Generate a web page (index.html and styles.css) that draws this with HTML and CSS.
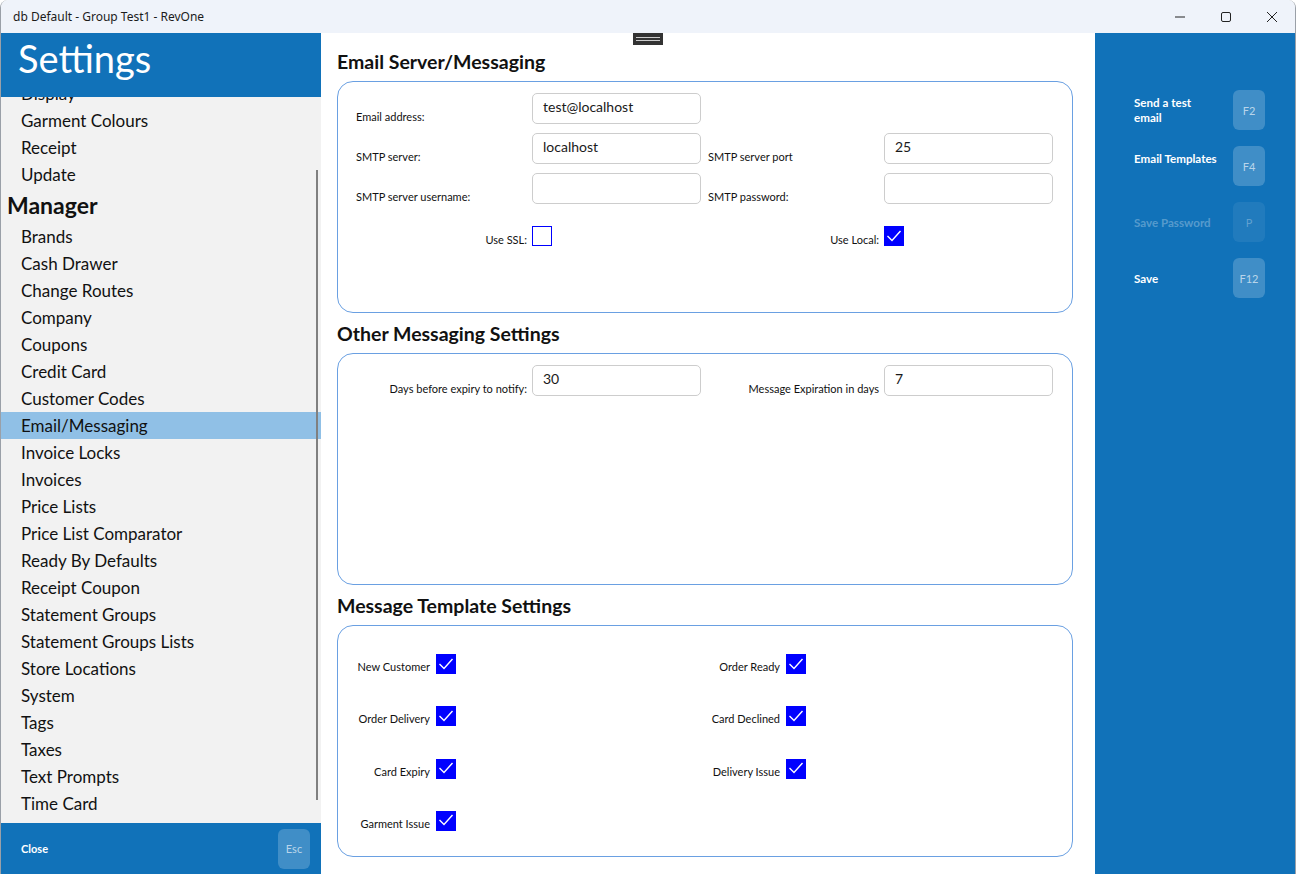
FILE: index.html
```html
<!DOCTYPE html>
<html>
<head>
<meta charset="utf-8">
<link rel="stylesheet" href="styles.css">
</head>
<body>
<div class="window">
  <div class="titlebar">
    <span class="title">db Default - Group Test1 - RevOne</span>
    <div class="controls">
      <svg class="ctl" width="46" height="33" viewBox="0 0 46 33"><line x1="18" y1="17" x2="28" y2="17" stroke="#222" stroke-width="1"/></svg>
      <svg class="ctl" width="46" height="33" viewBox="0 0 46 33"><rect x="18.5" y="12.5" width="9" height="9" rx="1.5" fill="none" stroke="#222" stroke-width="1"/></svg>
      <svg class="ctl" width="46" height="33" viewBox="0 0 46 33"><path d="M18 12 L28 22 M28 12 L18 22" stroke="#222" stroke-width="1"/></svg>
    </div>
  </div>
  <div class="content">
    <aside class="sidebar">
      <div class="side-head">Settings</div>
      <div class="list">
        <div class="items">
          <div class="item">Display</div>
          <div class="item">Garment Colours</div>
          <div class="item">Receipt</div>
          <div class="item">Update</div>
          <div class="group">Manager</div>
          <div class="item">Brands</div>
          <div class="item">Cash Drawer</div>
          <div class="item">Change Routes</div>
          <div class="item">Company</div>
          <div class="item">Coupons</div>
          <div class="item">Credit Card</div>
          <div class="item">Customer Codes</div>
          <div class="item selected">Email/Messaging</div>
          <div class="item">Invoice Locks</div>
          <div class="item">Invoices</div>
          <div class="item">Price Lists</div>
          <div class="item">Price List Comparator</div>
          <div class="item">Ready By Defaults</div>
          <div class="item">Receipt Coupon</div>
          <div class="item">Statement Groups</div>
          <div class="item">Statement Groups Lists</div>
          <div class="item">Store Locations</div>
          <div class="item">System</div>
          <div class="item">Tags</div>
          <div class="item">Taxes</div>
          <div class="item">Text Prompts</div>
          <div class="item">Time Card</div>
        </div>
        <div class="scrollbar"></div>
      </div>
      <div class="side-foot">
        <span class="foot-label">Close</span>
        <span class="key">Esc</span>
      </div>
    </aside>

    <main class="main">
      <div class="handle"><span></span><span></span></div>

      <h2 class="sec-title first">Email Server/Messaging</h2>
      <section class="box box-server">
        <div class="row">
          <div class="field"><label class="lbl">Email address:</label><div class="input">test@localhost</div></div>
        </div>
        <div class="row">
          <div class="field"><label class="lbl">SMTP server:</label><div class="input">localhost</div></div>
          <div class="field"><label class="lbl">SMTP server port</label><div class="input">25</div></div>
        </div>
        <div class="row">
          <div class="field"><label class="lbl">SMTP server username:</label><div class="input"></div></div>
          <div class="field"><label class="lbl">SMTP password:</label><div class="input"></div></div>
        </div>
        <div class="row row-check">
          <div class="field"><label class="lbl right">Use SSL:</label><div class="inputcol"><span class="cb"></span></div></div>
          <div class="field"><label class="lbl right">Use Local:</label><div class="inputcol"><span class="cb checked"><svg viewBox="0 0 20 20"><path d="M3.5 10 L8 14.5 L16.5 5" fill="none" stroke="#fff" stroke-width="1.4"/></svg></span></div></div>
        </div>
      </section>

      <h2 class="sec-title">Other Messaging Settings</h2>
      <section class="box box-other">
        <div class="row">
          <div class="field"><label class="lbl right">Days before expiry to notify:</label><div class="input">30</div></div>
          <div class="field"><label class="lbl right">Message Expiration in days</label><div class="input">7</div></div>
        </div>
      </section>

      <h2 class="sec-title">Message Template Settings</h2>
      <section class="box box-tpl">
        <div class="tpl-grid">
          <div class="tpl c1"><span class="tl">New Customer</span><span class="cb checked"><svg viewBox="0 0 20 20"><path d="M3.5 10 L8 14.5 L16.5 5" fill="none" stroke="#fff" stroke-width="1.4"/></svg></span></div>
          <div class="tpl c2"><span class="tl">Order Ready</span><span class="cb checked"><svg viewBox="0 0 20 20"><path d="M3.5 10 L8 14.5 L16.5 5" fill="none" stroke="#fff" stroke-width="1.4"/></svg></span></div>
          <div class="tpl c1"><span class="tl">Order Delivery</span><span class="cb checked"><svg viewBox="0 0 20 20"><path d="M3.5 10 L8 14.5 L16.5 5" fill="none" stroke="#fff" stroke-width="1.4"/></svg></span></div>
          <div class="tpl c2"><span class="tl">Card Declined</span><span class="cb checked"><svg viewBox="0 0 20 20"><path d="M3.5 10 L8 14.5 L16.5 5" fill="none" stroke="#fff" stroke-width="1.4"/></svg></span></div>
          <div class="tpl c1"><span class="tl">Card Expiry</span><span class="cb checked"><svg viewBox="0 0 20 20"><path d="M3.5 10 L8 14.5 L16.5 5" fill="none" stroke="#fff" stroke-width="1.4"/></svg></span></div>
          <div class="tpl c2"><span class="tl">Delivery Issue</span><span class="cb checked"><svg viewBox="0 0 20 20"><path d="M3.5 10 L8 14.5 L16.5 5" fill="none" stroke="#fff" stroke-width="1.4"/></svg></span></div>
          <div class="tpl c1"><span class="tl">Garment Issue</span><span class="cb checked"><svg viewBox="0 0 20 20"><path d="M3.5 10 L8 14.5 L16.5 5" fill="none" stroke="#fff" stroke-width="1.4"/></svg></span></div>
        </div>
      </section>
    </main>

    <aside class="actions">
      <div class="action">
        <span class="act-label">Send a test email</span>
        <span class="key">F2</span>
      </div>
      <div class="action top">
        <span class="act-label">Email Templates</span>
        <span class="key">F4</span>
      </div>
      <div class="action disabled">
        <span class="act-label">Save Password</span>
        <span class="key">P</span>
      </div>
      <div class="action">
        <span class="act-label">Save</span>
        <span class="key">F12</span>
      </div>
    </aside>
  </div>
</div>
</body>
</html>
```

FILE: styles.css
```css
* { box-sizing: border-box; }
html, body { margin: 0; padding: 0; }
body {
  width: 1296px;
  height: 874px;
  overflow: hidden;
  background: #ffffff;
  font-family: Lato, "Open Sans", "Noto Sans", sans-serif;
  color: #111;
}
.window {
  width: 1296px;
  height: 874px;
  display: flex;
  flex-direction: column;
  border-left: 1px solid #9aa0a8;
  border-right: 1px solid #9aa0a8;
  border-radius: 8px 8px 0 0;
  overflow: hidden;
}
.titlebar {
  height: 33px;
  flex: none;
  background: #eff3fa;
  display: flex;
  align-items: center;
  justify-content: space-between;
  padding-left: 12px;
}
.title {
  font-family: "Noto Sans", "Open Sans", sans-serif;
  font-size: 12px;
  color: #1b1b1b;
  padding-bottom: 1px;
}
.controls { display: flex; height: 33px; }
.ctl { display: block; }

.content {
  flex: 1;
  display: flex;
  min-height: 0;
}

/* Sidebar */
.sidebar {
  width: 320px;
  flex: none;
  display: flex;
  flex-direction: column;
  background: #f2f2f2;
}
.side-head {
  height: 64px;
  flex: none;
  background: #1172b9;
  color: #fff;
  font-size: 38px;
  line-height: 50px;
  padding-left: 17px;
}
.list {
  flex: 1;
  position: relative;
  overflow: hidden;
}
.items { margin-top: -17px; }
.item {
  height: 27px;
  line-height: 27px;
  font-size: 17px;
  padding-left: 20px;
  color: #111;
  white-space: nowrap;
}
.item.selected { background: #90c0e6; }
.group {
  height: 35px;
  line-height: 35px;
  font-size: 23px;
  font-weight: 700;
  padding-left: 6px;
  color: #111;
}
.scrollbar {
  position: absolute;
  right: 3px;
  top: 73px;
  width: 2px;
  height: 630px;
  background: #808080;
}
.side-foot {
  height: 51px;
  flex: none;
  background: #1172b9;
  display: flex;
  align-items: center;
  justify-content: space-between;
  padding: 0 11px 0 20px;
}
.foot-label {
  color: #fff;
  font-size: 11px;
  font-weight: 700;
}
.key {
  width: 32px;
  height: 40px;
  border-radius: 6px;
  background: rgba(255,255,255,0.2);
  color: rgba(255,255,255,0.65);
  font-size: 11px;
  display: flex;
  align-items: center;
  justify-content: center;
  flex: none;
}

/* Main */
.main {
  flex: 1;
  position: relative;
  background: #fff;
  padding: 16px 22px 0 16px;
}
.handle {
  position: absolute;
  top: 0;
  left: 312px;
  width: 30px;
  height: 12px;
  background: #333;
  display: flex;
  flex-direction: column;
  align-items: center;
  justify-content: center;
  gap: 2px;
}
.handle span {
  display: block;
  width: 24px;
  height: 1px;
  background: #ccc;
}
.sec-title {
  margin: 8px 0 6px;
  font-size: 19.5px;
  line-height: 26px;
  font-weight: 700;
  color: #111;
}
.sec-title.first { margin-top: 0; }
.box {
  height: 232px;
  border: 1px solid #6aa0e2;
  border-radius: 16px;
  padding: 11px 0 0 18px;
}
.row {
  display: flex;
  gap: 7px;
  margin-bottom: 9px;
}
.field {
  display: flex;
  align-items: flex-end;
}
.lbl {
  width: 176px;
  font-size: 11px;
  padding-bottom: 1px;
  color: #111;
}
.lbl.right {
  text-align: right;
  padding-right: 5px;
}
.input {
  width: 169px;
  height: 31px;
  border: 1px solid #cdcdcd;
  border-radius: 5px;
  font-size: 14px;
  padding: 4px 0 0 10px;
  color: #1a1a1a;
}
.inputcol { width: 169px; }
.row-check { margin-top: 22px; }
.row-check .lbl { padding-bottom: 0; }

.cb {
  display: block;
  width: 20px;
  height: 20px;
  border: 1.5px solid #0000ff;
  flex: none;
}
.cb.checked {
  background: #0000ff;
}
.cb svg { display: block; width: 20px; height: 20px; margin: -1.5px; }

.box-other { padding-top: 11px; }

.box-tpl { padding: 28px 0 0 0; }
.tpl-grid {
  display: grid;
  grid-template-columns: 118px 350px;
  row-gap: 32.3px;
}
.tpl {
  display: flex;
  align-items: flex-end;
  justify-content: flex-end;
  gap: 6px;
}
.tl {
  font-size: 11px;
  line-height: 13px;
  padding-bottom: 1px;
  color: #111;
}

/* Actions panel */
.actions {
  width: 200px;
  flex: none;
  background: #1172b9;
  padding: 57px 30px 0 39px;
  display: flex;
  flex-direction: column;
  gap: 16px;
}
.action {
  display: flex;
  align-items: center;
  justify-content: space-between;
}
.action.top { align-items: flex-start; }
.action.top .act-label { padding-top: 5px; }
.act-label {
  width: 86px;
  color: #fff;
  font-size: 11.6px;
  font-weight: 700;
  line-height: 15px;
}
.action.disabled .act-label { color: rgba(255,255,255,0.3); }
.action.disabled .key {
  background: rgba(255,255,255,0.07);
  color: rgba(255,255,255,0.3);
}
```
